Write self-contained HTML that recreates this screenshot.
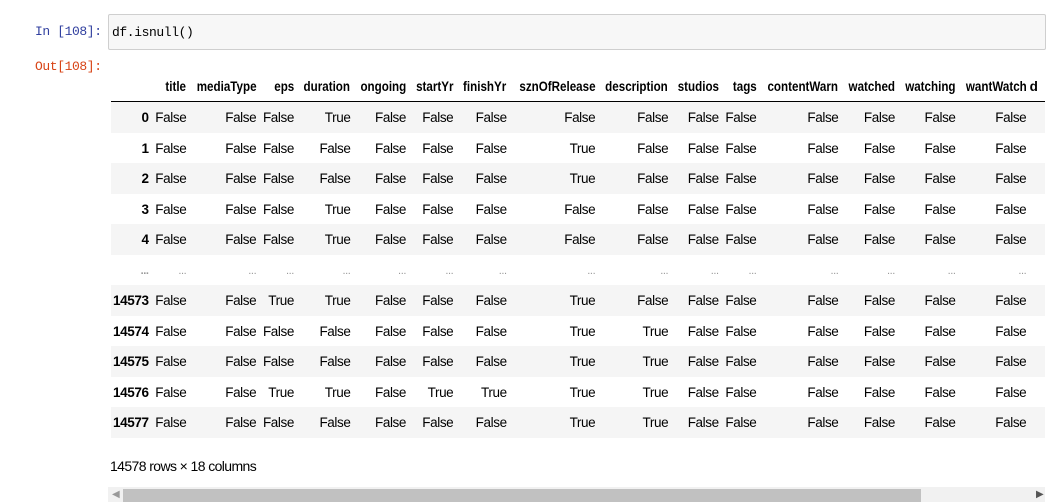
<!DOCTYPE html>
<html><head><meta charset="utf-8"><style>
body{margin:0;width:1050px;height:502px;background:#fff;overflow:hidden;position:relative;font-family:"Liberation Sans",sans-serif}
.p{position:absolute;font-family:"Liberation Mono",monospace;font-size:13px;letter-spacing:-0.4px}
.in{left:35px;top:24px;color:#303f9f}
.out{left:35px;top:59px;color:#d84315}
.box{position:absolute;left:108px;top:14px;width:936px;height:34px;background:#f7f7f7;border:1px solid #cfcfcf;border-radius:2px}
.box span{position:absolute;left:3px;top:10px;font-family:"Liberation Mono",monospace;font-size:13px;letter-spacing:-0.4px;color:#000}
.wrap{position:absolute;left:111px;top:72px;width:934px;overflow:hidden}
table{border-collapse:collapse;table-layout:fixed;font-size:13.5px;letter-spacing:-0.4px;color:#000}
td,th{text-align:right;padding:0;white-space:nowrap;overflow:visible}
th{font-weight:bold}
thead th{height:29px;border-bottom:1.5px solid #000;vertical-align:middle}
thead th span{display:inline-block;transform:scaleX(.86);transform-origin:right center;letter-spacing:0}
tbody td,tbody th{height:28.5px;padding-top:2px;line-height:16px;vertical-align:middle}
tbody tr.w{background:#fff}
tbody tr.g{background:#f5f5f5}
.dots td,.dots th{color:#999;font-size:11px}
.foot{position:absolute;left:110px;top:458px;font-size:14px;letter-spacing:-0.6px}
.sb{position:absolute;left:108px;top:487px;width:937px;height:15px;background:#f1f1f1}
.th{position:absolute;left:123px;top:489px;width:798px;height:13px;background:#c1c1c1}
.a1{position:absolute;left:112px;top:489px;font-size:10px;color:#999}
.a2{position:absolute;left:1036px;top:489px;font-size:10px;color:#555}
</style></head><body>
<div class="p in">In [108]:</div>
<div class="box"><span>df.isnull()</span></div>
<div class="p out">Out[108]:</div>
<div class="wrap"><table>
<colgroup><col style="width:38px"><col style="width:39px"><col style="width:70px"><col style="width:39px"><col style="width:57px"><col style="width:56px"><col style="width:48px"><col style="width:54px"><col style="width:85px"><col style="width:73px"><col style="width:51px"><col style="width:39px"><col style="width:81px"><col style="width:57px"><col style="width:61px"><col style="width:70px"><col style="width:20px"></colgroup>
<thead><tr><th></th><th><span>title</span></th><th><span>mediaType</span></th><th><span>eps</span></th><th><span>duration</span></th><th><span>ongoing</span></th><th><span>startYr</span></th><th><span>finishYr</span></th><th><span>sznOfRelease</span></th><th><span>description</span></th><th><span>studios</span></th><th><span>tags</span></th><th><span>contentWarn</span></th><th><span>watched</span></th><th><span>watching</span></th><th><span>wantWatch</span></th><th style="text-align:left">&nbsp;d</th></tr></thead>
<tbody>
<tr class="g"><th>0</th><td>False</td><td>False</td><td>False</td><td>True</td><td>False</td><td>False</td><td>False</td><td>False</td><td>False</td><td>False</td><td>False</td><td>False</td><td>False</td><td>False</td><td>False</td><td></td></tr>
<tr class="w"><th>1</th><td>False</td><td>False</td><td>False</td><td>False</td><td>False</td><td>False</td><td>False</td><td>True</td><td>False</td><td>False</td><td>False</td><td>False</td><td>False</td><td>False</td><td>False</td><td></td></tr>
<tr class="g"><th>2</th><td>False</td><td>False</td><td>False</td><td>False</td><td>False</td><td>False</td><td>False</td><td>True</td><td>False</td><td>False</td><td>False</td><td>False</td><td>False</td><td>False</td><td>False</td><td></td></tr>
<tr class="w"><th>3</th><td>False</td><td>False</td><td>False</td><td>True</td><td>False</td><td>False</td><td>False</td><td>False</td><td>False</td><td>False</td><td>False</td><td>False</td><td>False</td><td>False</td><td>False</td><td></td></tr>
<tr class="g"><th>4</th><td>False</td><td>False</td><td>False</td><td>True</td><td>False</td><td>False</td><td>False</td><td>False</td><td>False</td><td>False</td><td>False</td><td>False</td><td>False</td><td>False</td><td>False</td><td></td></tr>
<tr class="w dots"><th>...</th><td>...</td><td>...</td><td>...</td><td>...</td><td>...</td><td>...</td><td>...</td><td>...</td><td>...</td><td>...</td><td>...</td><td>...</td><td>...</td><td>...</td><td>...</td><td></td></tr>
<tr class="g"><th>14573</th><td>False</td><td>False</td><td>True</td><td>True</td><td>False</td><td>False</td><td>False</td><td>True</td><td>False</td><td>False</td><td>False</td><td>False</td><td>False</td><td>False</td><td>False</td><td></td></tr>
<tr class="w"><th>14574</th><td>False</td><td>False</td><td>False</td><td>False</td><td>False</td><td>False</td><td>False</td><td>True</td><td>True</td><td>False</td><td>False</td><td>False</td><td>False</td><td>False</td><td>False</td><td></td></tr>
<tr class="g"><th>14575</th><td>False</td><td>False</td><td>False</td><td>False</td><td>False</td><td>False</td><td>False</td><td>True</td><td>True</td><td>False</td><td>False</td><td>False</td><td>False</td><td>False</td><td>False</td><td></td></tr>
<tr class="w"><th>14576</th><td>False</td><td>False</td><td>True</td><td>True</td><td>False</td><td>True</td><td>True</td><td>True</td><td>True</td><td>False</td><td>False</td><td>False</td><td>False</td><td>False</td><td>False</td><td></td></tr>
<tr class="g"><th>14577</th><td>False</td><td>False</td><td>False</td><td>False</td><td>False</td><td>False</td><td>False</td><td>True</td><td>True</td><td>False</td><td>False</td><td>False</td><td>False</td><td>False</td><td>False</td><td></td></tr>
</tbody></table></div>
<div class="foot">14578 rows × 18 columns</div>
<div class="sb"></div><div class="th"></div>
<div class="a1">◀</div><div class="a2">▶</div>
</body></html>
